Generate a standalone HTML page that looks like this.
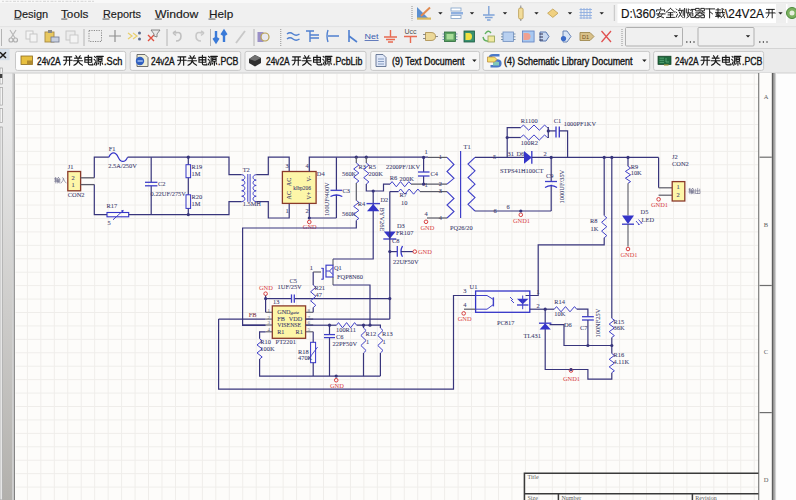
<!DOCTYPE html>
<html><head><meta charset="utf-8">
<style>
html,body{margin:0;padding:0;width:796px;height:500px;overflow:hidden;background:#f0f0f0}
svg{display:block}
.ui{font-family:"Liberation Sans",sans-serif;fill:#202020}
#ov{position:absolute;left:0;top:0;width:796px;height:500px}
.ut{position:absolute;font-family:"Liberation Sans",sans-serif;line-height:normal;white-space:pre;transform-origin:0 0}
.sc{font-family:"Liberation Serif",serif;font-size:6.4px;fill:#40406e;stroke:#40406e;stroke-width:0.08px}
.gnd{font-family:"Liberation Serif",serif;font-size:6.4px;fill:#d84040}
.tb{font-family:"Liberation Serif",serif;font-size:6px;fill:#606060}
</style></head><body>
<svg width="796" height="500" viewBox="0 0 796 500">
<defs>
<pattern id="grid" patternUnits="userSpaceOnUse" x="26.9" y="83.7" width="13.46" height="13.43">
<path d="M0 0.5H13.46M0.5 0V13.43" stroke="#efedea" stroke-width="1" fill="none"/>
</pattern>
</defs>

<rect x="0" y="0" width="796" height="3" fill="#f8f8f8"/>
<rect x="0" y="3" width="796" height="23.5" fill="#f0f0f0"/>
<rect x="0" y="26.5" width="796" height="22" fill="#efefef"/>
<rect x="0" y="48" width="796" height="1" fill="#d4d4d4"/>
<rect x="0" y="49" width="796" height="24" fill="#ebebeb"/>
<linearGradient id="lpg" x1="0" y1="0" x2="0" y2="1"><stop offset="0" stop-color="#ececec"/><stop offset="0.13" stop-color="#e8e8e8"/><stop offset="1" stop-color="#b2b0ac"/></linearGradient>
<rect x="0" y="49" width="14.5" height="451" fill="#ececec"/>
<rect x="2.6" y="73" width="9.8" height="427" fill="url(#lpg)"/>
<rect x="12.4" y="73" width="1.6" height="427" fill="#c8c8c8"/>
<linearGradient id="lbg" x1="0" y1="0" x2="0" y2="1"><stop offset="0" stop-color="#b4b4b4"/><stop offset="1" stop-color="#808080"/></linearGradient><rect x="14" y="73.5" width="1" height="427" fill="url(#lbg)"/>
<rect x="0" y="68" width="2.6" height="16" fill="#f4f4f4" stroke="#a0a0a0" stroke-width="0.7"/>
<rect x="0" y="74" width="2.2" height="4" fill="#404040"/>
<rect x="0" y="87.6" width="2.6" height="17.5" fill="#f4f4f4" stroke="#a0a0a0" stroke-width="0.7"/>
<rect x="0" y="108.5" width="2.6" height="14" fill="#f4f4f4" stroke="#a0a0a0" stroke-width="0.7"/>
<rect x="0" y="127" width="2.2" height="373" fill="#f6f6f6" stroke="#909090" stroke-width="0.7"/>
<rect x="15" y="73.5" width="760.5" height="427" fill="#fdfcfa"/>
<rect x="15.5" y="73.5" width="743" height="427" fill="url(#grid)"/>
<rect x="775" y="73" width="21" height="427" fill="#fdfdfd"/>
<rect x="0" y="72.5" width="796" height="1" fill="#cfcfcf"/>

<rect x="14" y="18.6" width="7" height="0.9" fill="#404040"/>
<rect x="61.3" y="18.6" width="6" height="0.9" fill="#404040"/>
<rect x="102.5" y="18.6" width="7" height="0.9" fill="#404040"/>
<rect x="154.8" y="18.6" width="7" height="0.9" fill="#404040"/>
<rect x="208.5" y="18.6" width="7" height="0.9" fill="#404040"/>
<path d="M2 1.4 H95" stroke="#dcdcdc" stroke-width="1.2" stroke-dasharray="2 1.5 3 1"/>
<rect x="452" y="2.3" width="344" height="0.8" fill="#e2e2e2"/>
<line x1="412" y1="6" x2="412" y2="20.5" stroke="#a8a8a8" stroke-width="1.3" stroke-dasharray="1 1"/>
<path d="M417 7 L417 18 L428 18 Z" fill="#5b8fd0"/><rect x="417" y="17.5" width="14" height="2.2" fill="#d8b860"/><path d="M421 16 L430 7.5" stroke="#e08a50" stroke-width="2"/>
<path d="M438.2 12.2 H442.59999999999997 L440.4 14.6 Z" fill="#202020"/>
<rect x="451" y="8" width="10" height="3" fill="#fff" stroke="#7fa0c8" stroke-width="0.8"/><rect x="451" y="12" width="12" height="2.5" fill="#8fb0e0"/><rect x="451" y="15.5" width="10" height="3" fill="#fff" stroke="#7fa0c8" stroke-width="0.8"/>
<path d="M469.8 12.2 H474.2 L472 14.6 Z" fill="#202020"/>
<path d="M488.8 6 V15 M483 15 H494.6 M485 17.5 H492.6 M487 20 H490.6" stroke="#7fa3d8" stroke-width="1.4"/>
<path d="M502.8 12.2 H507.2 L505 14.6 Z" fill="#202020"/>
<rect x="518.6" y="8" width="4.5" height="11" rx="1.5" fill="#f2dc9a" stroke="#b89a50" stroke-width="0.8"/><path d="M520.8 5.5 V8 M520.8 19 V21" stroke="#8a8a8a" stroke-width="1"/>
<path d="M534.3 12.2 H538.7 L536.5 14.6 Z" fill="#202020"/>
<path d="M547.6 13.2 L552.8 9 L558 13.2 L552.8 17.4 Z" fill="#f0d080" stroke="#c0a050" stroke-width="0.8"/>
<path d="M567.8 12.2 H572.2 L570 14.6 Z" fill="#202020"/>
<path d="M581 8V19 M584 8V19 M587 8V19 M590 8V19 M579.5 9.5H592 M579.5 12.5H592 M579.5 15.5H592 M579.5 18H592" stroke="#90aee0" stroke-width="0.9"/>
<path d="M599.5 12.2 H603.9000000000001 L601.7 14.6 Z" fill="#202020"/>
<line x1="614.4" y1="5.5" x2="614.4" y2="21" stroke="#a8a8a8" stroke-width="1.3" stroke-dasharray="1 1"/>
<rect x="617.5" y="4" width="170" height="19" fill="#ffffff"/>
<path d="M778.3 12.2 H782.7 L780.5 14.6 Z" fill="#202020"/>
<path transform="translate(655.6,7.9) scale(1.0)" d="M5 0V1.2 M1 3.5V2H9V3.5 M4.5 3.5Q3.5 6 2 7.5L8 9.8 M1 6H9.5 M7 6Q6 9 1.5 10" stroke="#1a1a1a" stroke-width="0.95" fill="none" stroke-linecap="round"/>
<path transform="translate(665.5,7.9) scale(1.0)" d="M5 0.5L0.5 4.5 M5 0.5L9.5 4.5 M2.5 4.8H7.5 M2.5 7H7.5 M1 9.5H9 M5 4.8V9.5" stroke="#1a1a1a" stroke-width="0.95" fill="none" stroke-linecap="round"/>
<path transform="translate(675.4,7.9) scale(1.0)" d="M0.8 1L1.8 2 M0.5 4L1.6 5 M0.6 9.5L2 6.5 M4.5 0.5V1.8 M3 2.5H7 M6.5 3Q5.5 7 3 9.5 M3.8 4Q5 7.5 7 9.5 M7.8 2V7.5 M9.2 0.5V9.5Q9.2 10 8.5 9.8" stroke="#1a1a1a" stroke-width="0.95" fill="none" stroke-linecap="round"/>
<path transform="translate(685.3000000000001,7.9) scale(1.0)" d="M1 1V5 M3 1V5 M4.5 1.5L6 3 M6 1.5H9.5 M7 1.5V4 M2.5 5H7.5V8 M2.5 5V8 M4.5 6Q4.5 9 1.5 10 M5.5 6V9.5H9.5V8.5" stroke="#1a1a1a" stroke-width="0.95" fill="none" stroke-linecap="round"/>
<path transform="translate(695.2,7.9) scale(1.0)" d="M0.8 0.5H4V3H0.8Z M6 0.5H9.2V3H6Z M0.5 5H9.5 M5 3.5Q4 6 1 7 M5.5 5L9 7 M7.2 3.5L8 4.2 M0.8 7.2H4V9.8H0.8Z M6 7.2H9.2V9.8H6Z" stroke="#1a1a1a" stroke-width="0.95" fill="none" stroke-linecap="round"/>
<path transform="translate(705.1,7.9) scale(1.0)" d="M0.5 1H9.5 M4.5 1V10 M5 4L7.5 6" stroke="#1a1a1a" stroke-width="0.95" fill="none" stroke-linecap="round"/>
<path transform="translate(715.0,7.9) scale(1.0)" d="M1 2H5.5 M3 0.5V4.5 M0.5 4.5H9.5 M7 0.5Q7.5 7 9.5 10 M8 1L9 1.8 M9.5 6L6 10 M1 6H5.5 M2.8 4.5L1.5 7.5H5 M3.2 6V10 M0.5 8.5H6" stroke="#1a1a1a" stroke-width="0.95" fill="none" stroke-linecap="round"/>
<path transform="translate(765.4,7.9) scale(1.0)" d="M1 1.5H9 M0.5 5H9.5 M3.5 1.5V6Q3.3 8.5 1.2 9.8 M6.8 1.5V10" stroke="#1a1a1a" stroke-width="0.95" fill="none" stroke-linecap="round"/>
<path transform="translate(775.6,7.9) scale(1.0)" d="M2.8 0.3L3.8 1.8 M7.2 0.3L6.2 1.8 M1.5 2.8H8.5 M0.5 5.5H9.5 M5 2.8V5.5Q4.5 8.5 0.8 10 M5.2 6Q6.5 8.7 9.5 10" stroke="#1a1a1a" stroke-width="0.95" fill="none" stroke-linecap="round"/>
<rect x="776" y="4" width="10" height="19" fill="#eeeeee"/>
<path d="M778.3 12.2 H782.7 L780.5 14.6 Z" fill="#202020"/>
<circle cx="792" cy="13" r="5.5" fill="#7cb060" stroke="#4a8a3a" stroke-width="1"/><circle cx="792" cy="13" r="2.5" fill="#e8f0e0"/>
<rect x="0" y="26.3" width="796" height="0.8" fill="#dedede"/>
<line x1="1.5" y1="29" x2="1.5" y2="46" stroke="#b4b4b4" stroke-width="1"/>
<path d="M10 30 L15 38 M16 30 L11 38" stroke="#b8b8b8" stroke-width="1.2"/><circle cx="11" cy="40" r="2" fill="none" stroke="#b0b0b0" stroke-width="1.2"/><circle cx="15.5" cy="40" r="2" fill="none" stroke="#b0b0b0" stroke-width="1.2"/>
<rect x="26" y="31" width="7" height="8" fill="#f4f4f4" stroke="#c4c4c4" stroke-width="0.9"/><rect x="30" y="34" width="7" height="8" fill="#f4f4f4" stroke="#c4c4c4" stroke-width="0.9"/>
<rect x="45" y="32" width="9" height="10" fill="#e8c860" stroke="#a88a40" stroke-width="0.9"/><rect x="48" y="30" width="4" height="3" fill="#888"/><rect x="51" y="37" width="8" height="5" fill="#c8d0e0" stroke="#707890" stroke-width="0.8"/>
<rect x="66" y="31" width="9" height="9" fill="#ececec" stroke="#c4c4c4" stroke-width="0.9"/><rect x="70" y="35" width="8" height="8" fill="#f4f4f4" stroke="#c8c8c8" stroke-width="0.9"/>
<line x1="84" y1="29" x2="84" y2="46" stroke="#b4b4b4" stroke-width="1"/>
<rect x="89" y="30.5" width="12.5" height="11" fill="none" stroke="#8a8a8a" stroke-width="1" stroke-dasharray="1.2 1.2"/>
<path d="M115 30 V42 M109 36 H121" stroke="#909090" stroke-width="1.2"/>
<path d="M128 33 L132 36 L128 39 M133 33 L137 36 L133 39" stroke="#e8d070" stroke-width="1.3" fill="none"/><circle cx="139.5" cy="33" r="1.5" fill="#607090"/><circle cx="139.5" cy="39" r="1.5" fill="#607090"/>
<path d="M148 35 L154 41 M154 35 L148 41" stroke="#e05040" stroke-width="1.4"/><path d="M151 30 H160 L157 34 V37 L154 36 V34 Z" fill="#e8e8e8" stroke="#707070" stroke-width="0.8"/>
<line x1="167" y1="29" x2="167" y2="46" stroke="#b4b4b4" stroke-width="1"/>
<path d="M175 33 Q181 31 181 36 Q181 41 176 41 M173 33 L176 31 M173 33 L176 35.5" stroke="#c0c0c0" stroke-width="1.6" fill="none"/>
<path d="M202 33 Q196 31 196 36 Q196 41 201 41 M204 33 L201 31 M204 33 L201 35.5" stroke="#c8c8c8" stroke-width="1.6" fill="none"/>
<line x1="210.5" y1="29" x2="210.5" y2="46" stroke="#b4b4b4" stroke-width="1"/>
<path d="M216 31 V41 M213.5 38 L216 42 L218.5 38" stroke="#3a7ad8" stroke-width="2.4" fill="none"/><path d="M224 42 V32 M221.5 35 L224 31 L226.5 35" stroke="#3a7ad8" stroke-width="2.4" fill="none"/>
<path d="M236 43 L245 31" stroke="#c8c8c8" stroke-width="1.8"/>
<line x1="254" y1="29" x2="254" y2="46" stroke="#b4b4b4" stroke-width="1"/>
<rect x="257.5" y="32" width="6" height="10" fill="#9a90c8"/><circle cx="265" cy="37" r="4" fill="#e8e8f0" stroke="#b8a050" stroke-width="1.2"/>
<line x1="280.7" y1="29" x2="280.7" y2="46" stroke="#a8a8a8" stroke-width="1.3" stroke-dasharray="1 1"/>
<path d="M287 34 Q290 31.5 293 34 T299.5 34 M287 39 Q290 36.5 293 39 T299.5 39" stroke="#5080d0" stroke-width="1.4" fill="none"/>
<path d="M306 31 H314 M310 31 V42 M310 35 H319 M310 38 H319" stroke="#5080d0" stroke-width="1.4" fill="none"/>
<path d="M328 30 Q326 36 328 42 M328 36 H339" stroke="#5080d0" stroke-width="1.4" fill="none" stroke-dasharray="none"/>
<path d="M349 30 V42 M349 36 L357 42" stroke="#5080d0" stroke-width="1.6" fill="none"/>
<text x="364.6" y="38.5" class="ui" style="font-size:7px;fill:#4060b0" textLength="14" lengthAdjust="spacingAndGlyphs">Net</text><rect x="364.6" y="40" width="14" height="0.8" fill="#4060b0"/>
<path d="M390.5 30 V37 M384 37 H397 M386 39.5 H395 M388 42 H393" stroke="#e86a50" stroke-width="1.4"/>
<text x="404.5" y="33.8" class="ui" style="font-size:7px;fill:#505050">Ucc</text><path d="M404 36.5 H417 M410.5 36.5 V43" stroke="#e86a50" stroke-width="1.4"/>
<path d="M425.5 32.5 H431 Q435.5 32.5 435.5 36.5 Q435.5 40.5 431 40.5 H425.5 Z" fill="#ecd898" stroke="#a88a48" stroke-width="0.8"/><path d="M423 34.5 H425.5 M423 38.5 H425.5 M435.5 36.5 H438" stroke="#707070" stroke-width="0.8"/>
<rect x="444.5" y="32" width="11" height="9.5" fill="#5aa060" stroke="#2a6a3a" stroke-width="0.8"/><rect x="446.5" y="34" width="7" height="5.5" fill="#a8dc98"/><path d="M442.5 34 H444.5 M442.5 36.8 H444.5 M442.5 39.5 H444.5 M455.5 34 H457.5 M455.5 36.8 H457.5 M455.5 39.5 H457.5" stroke="#6080a0" stroke-width="0.8"/>
<rect x="464" y="31" width="10.5" height="11" fill="#3a9070" stroke="#1a5a40" stroke-width="0.8"/><path d="M465.5 33 H469 Q472 33 472 36.5 Q472 40 469 40 H465.5 Z" fill="#f0e040"/>
<path d="M485 34 Q488 29 491 33 M483 37 Q484 42 489 41" stroke="#60b060" stroke-width="1.4" fill="none"/><rect x="488" y="36" width="6.5" height="6" fill="#f0e8a0" stroke="#90a050" stroke-width="0.8"/>
<rect x="503" y="32" width="10.5" height="9.5" fill="#b8d0f0" stroke="#7090c0" stroke-width="0.8"/><path d="M501 34 H503 M501 36.8 H503 M501 39.5 H503 M513.5 34 H515.5 M513.5 36.8 H515.5 M513.5 39.5 H515.5" stroke="#6080a0" stroke-width="0.8"/>
<rect x="522.6" y="31" width="11.5" height="11" fill="#a8c8f0" stroke="#6080c0" stroke-width="0.8"/><path d="M523.5 33 H527 Q530.5 33 530.5 36.5 Q530.5 40 527 40 H523.5 Z" fill="#f0a090"/>
<path d="M540 32 H546 L549 36.5 L546 41 H540 Z" fill="#c8d8f0" stroke="#5a78b0" stroke-width="1"/><path d="M539.5 34 H543 M539.5 37 H543 M539.5 40 H543" stroke="#303050" stroke-width="1"/>
<path d="M563 31 H567 L571 36.5 L567 42 H563 Z" fill="#d8e4f4" stroke="#5a78b0" stroke-width="0.9"/><circle cx="563.5" cy="38.5" r="2.6" fill="#3a6ac8"/>
<path d="M580 32.5 H590 L594 36.5 L590 40.5 H580 Z" fill="#d8c088" stroke="#a08a50" stroke-width="0.9"/><text x="582" y="39" class="ui" style="font-size:5.5px;fill:#705020">D1</text>
<path d="M601.5 31 L611 42 M611 31 L601.5 42" stroke="#e05050" stroke-width="1.3"/>
<line x1="622" y1="29" x2="622" y2="46" stroke="#a8a8a8" stroke-width="1.3" stroke-dasharray="1 1"/>
<rect x="625.5" y="27.5" width="57" height="18.5" fill="#f0f0f0" stroke="#a8a8a8" stroke-width="0.9" rx="1"/>
<path d="M673.8 35.2 H678.2 L676 37.6 Z" fill="#202020"/>
<path d="M686.2 42h1.2M689.8 42h1.2M693.4 42h1.2" stroke="#404040" stroke-width="1.3"/>
<rect x="698" y="27.5" width="56" height="18.5" fill="#f0f0f0" stroke="#a8a8a8" stroke-width="0.9" rx="1"/>
<path d="M745.8 35.2 H750.2 L748 37.6 Z" fill="#202020"/>
<path d="M759.2 42h1.2M762.8 42h1.2M766.4 42h1.2" stroke="#404040" stroke-width="1.3"/>
<rect x="0" y="49" width="9.6" height="11.2" fill="#d4dfea"/>
<path d="M0 52.2 L6 58 M6 52.2 L0 58" stroke="#1a1a1a" stroke-width="1.5"/>
<rect x="15.5" y="51.4" width="110.2" height="19" rx="2" fill="#fdfdfd" stroke="#c8c8c8" stroke-width="1"/>
<rect x="21" y="56" width="11.5" height="8.5" fill="#e8c040" stroke="#8a6a20" stroke-width="0.8"/><rect x="27" y="60.5" width="5.5" height="4" fill="#b08a30"/>
<path transform="translate(62.9,55.4) scale(0.9800000000000001)" d="M1 1.5H9 M0.5 5H9.5 M3.5 1.5V6Q3.3 8.5 1.2 9.8 M6.8 1.5V10" stroke="#181818" stroke-width="1.17" fill="none" stroke-linecap="round"/>
<path transform="translate(73.15,55.4) scale(0.9800000000000001)" d="M2.8 0.3L3.8 1.8 M7.2 0.3L6.2 1.8 M1.5 2.8H8.5 M0.5 5.5H9.5 M5 2.8V5.5Q4.5 8.5 0.8 10 M5.2 6Q6.5 8.7 9.5 10" stroke="#181818" stroke-width="1.17" fill="none" stroke-linecap="round"/>
<path transform="translate(83.4,55.4) scale(0.9800000000000001)" d="M1.5 2H8.5V7H1.5Z M1.5 4.5H8.5 M5 0V8.5Q5 9.7 6.5 9.7H9.5V8.5" stroke="#181818" stroke-width="1.17" fill="none" stroke-linecap="round"/>
<path transform="translate(93.65,55.4) scale(0.9800000000000001)" d="M0.8 1L1.8 2 M0.5 4L1.6 5 M0.6 9.5L2 6.5 M3 1H9.8 M3.5 1V6Q3.3 8.5 2.5 10 M5 2.5H8.5V6H5Z M5 4.2H8.5 M6.8 6V10 M5.2 7.5L4.5 9 M8.5 7.5L9.2 9" stroke="#181818" stroke-width="1.17" fill="none" stroke-linecap="round"/>
<rect x="130.2" y="51.4" width="110.5" height="19" rx="2" fill="#f6f6f6" stroke="#c8c8c8" stroke-width="1"/>
<path d="M137 54.5 H145 L148 57.5 V66.5 H137 Z" fill="#eeeed8" stroke="#606060" stroke-width="0.9"/><circle cx="140" cy="61" r="4.2" fill="#3060c0"/><path d="M137.5 61 H142.8" stroke="#c8e0ff" stroke-width="1.1"/>
<path transform="translate(177.0,55.4) scale(0.9800000000000001)" d="M1 1.5H9 M0.5 5H9.5 M3.5 1.5V6Q3.3 8.5 1.2 9.8 M6.8 1.5V10" stroke="#181818" stroke-width="1.17" fill="none" stroke-linecap="round"/>
<path transform="translate(187.25,55.4) scale(0.9800000000000001)" d="M2.8 0.3L3.8 1.8 M7.2 0.3L6.2 1.8 M1.5 2.8H8.5 M0.5 5.5H9.5 M5 2.8V5.5Q4.5 8.5 0.8 10 M5.2 6Q6.5 8.7 9.5 10" stroke="#181818" stroke-width="1.17" fill="none" stroke-linecap="round"/>
<path transform="translate(197.5,55.4) scale(0.9800000000000001)" d="M1.5 2H8.5V7H1.5Z M1.5 4.5H8.5 M5 0V8.5Q5 9.7 6.5 9.7H9.5V8.5" stroke="#181818" stroke-width="1.17" fill="none" stroke-linecap="round"/>
<path transform="translate(207.75,55.4) scale(0.9800000000000001)" d="M0.8 1L1.8 2 M0.5 4L1.6 5 M0.6 9.5L2 6.5 M3 1H9.8 M3.5 1V6Q3.3 8.5 2.5 10 M5 2.5H8.5V6H5Z M5 4.2H8.5 M6.8 6V10 M5.2 7.5L4.5 9 M8.5 7.5L9.2 9" stroke="#181818" stroke-width="1.17" fill="none" stroke-linecap="round"/>
<rect x="245" y="51.4" width="121" height="19" rx="2" fill="#f6f6f6" stroke="#c8c8c8" stroke-width="1"/>
<path d="M249 59 L255 55 L261 58 V63 L255 66.5 L249 63 Z" fill="#303030"/><path d="M249 59 L255 55 L261 58 L255 61 Z" fill="#707070"/>
<path transform="translate(291.6,55.4) scale(0.9800000000000001)" d="M1 1.5H9 M0.5 5H9.5 M3.5 1.5V6Q3.3 8.5 1.2 9.8 M6.8 1.5V10" stroke="#181818" stroke-width="1.17" fill="none" stroke-linecap="round"/>
<path transform="translate(301.85,55.4) scale(0.9800000000000001)" d="M2.8 0.3L3.8 1.8 M7.2 0.3L6.2 1.8 M1.5 2.8H8.5 M0.5 5.5H9.5 M5 2.8V5.5Q4.5 8.5 0.8 10 M5.2 6Q6.5 8.7 9.5 10" stroke="#181818" stroke-width="1.17" fill="none" stroke-linecap="round"/>
<path transform="translate(312.1,55.4) scale(0.9800000000000001)" d="M1.5 2H8.5V7H1.5Z M1.5 4.5H8.5 M5 0V8.5Q5 9.7 6.5 9.7H9.5V8.5" stroke="#181818" stroke-width="1.17" fill="none" stroke-linecap="round"/>
<path transform="translate(322.35,55.4) scale(0.9800000000000001)" d="M0.8 1L1.8 2 M0.5 4L1.6 5 M0.6 9.5L2 6.5 M3 1H9.8 M3.5 1V6Q3.3 8.5 2.5 10 M5 2.5H8.5V6H5Z M5 4.2H8.5 M6.8 6V10 M5.2 7.5L4.5 9 M8.5 7.5L9.2 9" stroke="#181818" stroke-width="1.17" fill="none" stroke-linecap="round"/>
<rect x="370.7" y="51.4" width="108.90000000000003" height="19" rx="2" fill="#f6f6f6" stroke="#c8c8c8" stroke-width="1"/>
<path d="M376 54.5 H383 L386 57.5 V66.5 H376 Z" fill="#e0e8f8" stroke="#607090" stroke-width="0.9"/><path d="M378 59 H384 M378 61.5 H384 M378 64 H384" stroke="#7088b0" stroke-width="0.8"/>
<path d="M472.2 59.6 H476.59999999999997 L474.4 62.0 Z" fill="#202020"/>
<rect x="483" y="51.4" width="166.70000000000005" height="19" rx="2" fill="#f6f6f6" stroke="#c8c8c8" stroke-width="1"/>
<path d="M499.5 55.2 H493 Q490 55.2 490 58 Q490 60.5 493 60.5 H497 Q500.3 60.5 500.3 63.2 Q500.3 66.2 497 66.2 H490.5" stroke="#4a78c8" stroke-width="2.6" fill="none"/><rect x="493" y="62" width="6" height="3.5" fill="#80c8b8"/><path d="M487.5 57 H494.5 L497 59.5 L494.5 62 H487.5 Z" fill="#f4e070" stroke="#c09040" stroke-width="0.8"/>
<path d="M642.1999999999999 59.6 H646.6 L644.4 62.0 Z" fill="#202020"/>
<rect x="653.6" y="51.4" width="110.0" height="19" rx="2" fill="#f6f6f6" stroke="#c8c8c8" stroke-width="1"/>
<rect x="658" y="56.2" width="13" height="8.3" fill="#1f6a3e" stroke="#0f3a20" stroke-width="0.7"/><path d="M659.5 58.2 H664 M659.5 60.3 H664 M659.5 62.4 H664 M666 58 V62 H669" stroke="#6ab888" stroke-width="0.7" fill="none"/><rect x="664" y="64.3" width="4.5" height="1.3" fill="#9a9a40"/>
<path transform="translate(700.5,55.4) scale(0.9800000000000001)" d="M1 1.5H9 M0.5 5H9.5 M3.5 1.5V6Q3.3 8.5 1.2 9.8 M6.8 1.5V10" stroke="#181818" stroke-width="1.17" fill="none" stroke-linecap="round"/>
<path transform="translate(710.75,55.4) scale(0.9800000000000001)" d="M2.8 0.3L3.8 1.8 M7.2 0.3L6.2 1.8 M1.5 2.8H8.5 M0.5 5.5H9.5 M5 2.8V5.5Q4.5 8.5 0.8 10 M5.2 6Q6.5 8.7 9.5 10" stroke="#181818" stroke-width="1.17" fill="none" stroke-linecap="round"/>
<path transform="translate(721.0,55.4) scale(0.9800000000000001)" d="M1.5 2H8.5V7H1.5Z M1.5 4.5H8.5 M5 0V8.5Q5 9.7 6.5 9.7H9.5V8.5" stroke="#181818" stroke-width="1.17" fill="none" stroke-linecap="round"/>
<path transform="translate(731.25,55.4) scale(0.9800000000000001)" d="M0.8 1L1.8 2 M0.5 4L1.6 5 M0.6 9.5L2 6.5 M3 1H9.8 M3.5 1V6Q3.3 8.5 2.5 10 M5 2.5H8.5V6H5Z M5 4.2H8.5 M6.8 6V10 M5.2 7.5L4.5 9 M8.5 7.5L9.2 9" stroke="#181818" stroke-width="1.17" fill="none" stroke-linecap="round"/>
<g id="sch">
<rect x="67.8" y="171.5" width="12.8" height="19.3" fill="#fdf6a8" stroke="#8a3a2a" stroke-width="1.3"/>
<text x="71.6" y="179.6" class="sc" >2</text>
<text x="71.6" y="187.2" class="sc" >1</text>
<text x="67.8" y="168.8" class="sc" >J1</text>
<text x="67.8" y="197" class="sc" >CON2</text>
<path transform="translate(54.4,177.2) scale(0.58)" d="M0.5 2H4 M2 0.5L1 5H3.8 M2.3 3.5V10 M0.3 7H4.2 M7 0.5L4.5 3.5 M7 0.5L9.5 3.5 M5.5 3.8H8.5 M5 5V10 M5 5H6.8V9.5 M5 7H6.8 M8 5V8 M9.3 4.5V10" stroke="#5a5a7a" stroke-width="0.95" fill="none" stroke-linecap="round"/>
<path transform="translate(60.6,177.2) scale(0.58)" d="M3.5 1L5 2Q5 6 1 10 M5 3Q6.5 7.5 9.5 10" stroke="#5a5a7a" stroke-width="0.95" fill="none" stroke-linecap="round"/>
<path d="M80.6 177.8 L94.3 177.8" stroke="#5a5a66" stroke-width="1.3" fill="none"/>
<path d="M80.6 184.6 L94.3 184.6" stroke="#5a5a66" stroke-width="1.3" fill="none"/>
<path d="M94.3 177.8 L94.3 157.2 L108.8 157.2" stroke="#38357c" stroke-width="1.2" fill="none"/>
<path d="M94.3 184.6 L94.3 214.6 L107.0 214.6" stroke="#38357c" stroke-width="1.2" fill="none"/>
<path d="M108.8 157.2 C111.5 151.5 115.5 151.5 118.2 157.2 C120.9 162.9 124.9 162.9 127.6 157.2" stroke="#3434c8" stroke-width="1.2" fill="none"/>
<text x="108.8" y="151" class="sc" >F1</text>
<text x="108.3" y="168" class="sc" >2.5A/250V</text>
<path d="M127.6 157.2 L229.0 157.2 L229.0 174.7 L241.7 174.7" stroke="#38357c" stroke-width="1.2" fill="none"/>
<rect x="107" y="212.5" width="21.7" height="4.3" fill="none" stroke="#3434c8" stroke-width="1.1"/>
<path d="M113.0 219.8 L123.2 210.5" stroke="#4040c8" stroke-width="1.0" fill="none"/>
<path d="M121 210.6 L123.6 210.1 L123 212.6 Z" fill="#3434c8"/>
<text x="106.6" y="207.8" class="sc" >R17</text>
<text x="107.6" y="224.6" class="sc" >5</text>
<path d="M128.7 214.6 L229.0 214.6 L229.0 201.6 L241.7 201.6" stroke="#38357c" stroke-width="1.2" fill="none"/>
<path d="M151.2 157.2 L151.2 182.3" stroke="#38357c" stroke-width="1.2" fill="none"/>
<path d="M151.2 185.8 L151.2 214.6" stroke="#38357c" stroke-width="1.2" fill="none"/>
<path d="M145.0 182.3 L157.4 182.3" stroke="#4040c8" stroke-width="1.3" fill="none"/>
<path d="M145.0 185.8 L157.4 185.8" stroke="#4040c8" stroke-width="1.3" fill="none"/>
<text x="158" y="185.7" class="sc" >C2</text>
<text x="150.6" y="195.8" class="sc" >0.22UF/275V</text>
<path d="M188.3 157.2 L188.3 164.7" stroke="#38357c" stroke-width="1.2" fill="none"/>
<rect x="186" y="164.7" width="4.6" height="13" fill="none" stroke="#3434c8" stroke-width="1.0"/>
<path d="M188.3 177.7 L188.3 194.8" stroke="#38357c" stroke-width="1.2" fill="none"/>
<rect x="186" y="194.8" width="4.6" height="13.6" fill="none" stroke="#3434c8" stroke-width="1.0"/>
<path d="M188.3 208.4 L188.3 214.6" stroke="#38357c" stroke-width="1.2" fill="none"/>
<circle cx="188.3" cy="157.2" r="1.6" fill="#38357c"/>
<circle cx="188.3" cy="214.6" r="1.6" fill="#38357c"/>
<text x="191.6" y="168.8" class="sc" >R19</text>
<text x="191.6" y="175.6" class="sc" >1M</text>
<text x="191.6" y="199.4" class="sc" >R20</text>
<text x="191.6" y="206.2" class="sc" >1M</text>
<path d="M241.7 174.7 C245.89999999999998 174.969 245.89999999999998 179.81099999999998 241.7 180.07999999999998 C245.89999999999998 180.349 245.89999999999998 185.19099999999997 241.7 185.45999999999998 C245.89999999999998 185.72899999999998 245.89999999999998 190.57099999999997 241.7 190.83999999999997 C245.89999999999998 191.10899999999998 245.89999999999998 195.95099999999996 241.7 196.21999999999997 C245.89999999999998 196.48899999999998 245.89999999999998 201.33099999999996 241.7 201.59999999999997" stroke="#4040c8" stroke-width="1.0" fill="none"/>
<path d="M256.2 174.7 C252.0 174.969 252.0 179.81099999999998 256.2 180.07999999999998 C252.0 180.349 252.0 185.19099999999997 256.2 185.45999999999998 C252.0 185.72899999999998 252.0 190.57099999999997 256.2 190.83999999999997 C252.0 191.10899999999998 252.0 195.95099999999996 256.2 196.21999999999997 C252.0 196.48899999999998 252.0 201.33099999999996 256.2 201.59999999999997" stroke="#4040c8" stroke-width="1.0" fill="none"/>
<path d="M247.8 174.0 L247.8 201.8" stroke="#4040c8" stroke-width="1.0" fill="none"/>
<path d="M250.1 174.0 L250.1 201.8" stroke="#4040c8" stroke-width="1.0" fill="none"/>
<text x="242.7" y="171.5" class="sc" >T2</text>
<text x="242.7" y="206.4" class="sc" >1.5MH</text>
<path d="M256.2 174.7 L268.3 174.7 L268.3 157.1 L289.2 157.1 L289.2 171.5" stroke="#38357c" stroke-width="1.2" fill="none"/>
<path d="M256.2 201.6 L268.3 201.6 L268.3 218.0 L289.2 218.0 L289.2 203.4" stroke="#38357c" stroke-width="1.2" fill="none"/>
<rect x="282.4" y="171.5" width="33.7" height="31.9" fill="#fdf6a8" stroke="#8a3a2a" stroke-width="1.3"/>
<text x="293.2" y="189.6" class="sc" style="font-size:5.4px;fill:#3a3a70">klbp206</text>
<text class="sc" transform="translate(290.8,186.2) rotate(-90)" style="font-size:6px;fill:#3a3a70">AC</text>
<text class="sc" transform="translate(290.8,199.4) rotate(-90)" style="font-size:6px;fill:#3a3a70">AC</text>
<text class="sc" transform="translate(311,181.6) rotate(-90)" style="font-size:6px;fill:#3a3a70">V-</text>
<text class="sc" transform="translate(311,199.6) rotate(-90)" style="font-size:6px;fill:#3a3a70">V+</text>
<text x="285.4" y="167.5" class="sc" >3</text>
<text x="285.4" y="212.5" class="sc" >1</text>
<text x="305.5" y="167.5" class="sc" >4</text>
<text x="305.5" y="212.5" class="sc" >2</text>
<text x="316.8" y="176" class="sc" >D4</text>
<path d="M309.3 171.5 L309.3 157.2 L428.0 157.2" stroke="#38357c" stroke-width="1.2" fill="none"/>
<path d="M428.0 157.4 L447.0 157.4" stroke="#5a5a66" stroke-width="1.2" fill="none"/>
<path d="M309.3 203.4 L309.3 218.0 L336.4 218.0" stroke="#38357c" stroke-width="1.2" fill="none"/>
<circle cx="309.3" cy="218" r="1.6" fill="#38357c"/>
<circle cx="309.3" cy="222" r="1.8" fill="none" stroke="#d84040" stroke-width="1"/>
<text x="302.8" y="229" class="gnd" >GND</text>
<path d="M336.4 157.2 L336.4 190.3" stroke="#38357c" stroke-width="1.2" fill="none"/>
<path d="M336.4 194.8 L336.4 218.0" stroke="#38357c" stroke-width="1.2" fill="none"/>
<path d="M330.5 190.3 L342.3 190.3" stroke="#4040c8" stroke-width="1.3" fill="none"/>
<path d="M330.5 196.5 Q336.4 193.5 342.3 196.5" stroke="#3434c8" stroke-width="1.3" fill="none"/>
<text x="342.5" y="193" class="sc" >C3</text>
<text class="sc" transform="translate(329,216) rotate(-90)">100UF/400V</text>
<circle cx="356.3" cy="157.2" r="1.6" fill="#38357c"/>
<circle cx="366.3" cy="157.2" r="1.6" fill="#38357c"/>
<path d="M356.3 163.0 L358.9 165.0 L353.7 169.0 L358.9 173.0 L353.7 177.0 L358.9 181.0 L356.3 183.0" stroke="#4040c8" stroke-width="1.0" fill="none"/>
<path d="M356.3 200.4 L358.9 202.4 L353.7 206.4 L358.9 210.4 L353.7 214.4 L358.9 218.4 L356.3 220.4" stroke="#4040c8" stroke-width="1.0" fill="none"/>
<path d="M356.3 157.2 L356.3 163.0" stroke="#5a5a66" stroke-width="1.2" fill="none"/>
<path d="M356.3 183.0 L356.3 200.4" stroke="#5a5a66" stroke-width="1.2" fill="none"/>
<path d="M356.3 220.4 L356.3 228.0 L242.6 228.0 L242.6 325.4 L265.6 325.4" stroke="#38357c" stroke-width="1.2" fill="none"/>
<text x="358.5" y="168.6" class="sc" >R3</text>
<text x="342" y="176" class="sc" >560K</text>
<text x="357.8" y="206" class="sc" >R4</text>
<text x="342" y="215.5" class="sc" >560K</text>
<path d="M366.3 163.0 L368.9 165.1 L363.7 169.3 L368.9 173.5 L363.7 177.7 L368.9 181.9 L366.3 184.0" stroke="#4040c8" stroke-width="1.0" fill="none"/>
<path d="M366.3 157.2 L366.3 163.0" stroke="#5a5a66" stroke-width="1.2" fill="none"/>
<text x="368.6" y="168.6" class="sc" >R5</text>
<text x="368.6" y="176" class="sc" >200K</text>
<path d="M366.3 184.0 L366.3 191.0 L383.5 191.0 L383.5 184.2 L390.0 184.2" stroke="#38357c" stroke-width="1.2" fill="none"/>
<circle cx="373.2" cy="191" r="1.6" fill="#38357c"/>
<path d="M390.0 184.2 L392.1 181.6 L396.3 186.8 L400.5 181.6 L404.7 186.8 L408.9 181.6 L411.0 184.2" stroke="#4040c8" stroke-width="1.0" fill="none"/>
<path d="M411.0 184.2 L447.0 184.2" stroke="#5a5a66" stroke-width="1.2" fill="none"/>
<text x="389.8" y="180.4" class="sc" >R6</text>
<text x="399.6" y="181" class="sc" >200K</text>
<path d="M389.8 191.6 L398.5 191.6" stroke="#38357c" stroke-width="1.2" fill="none"/>
<path d="M398.5 191.6 L400.6 189.0 L404.9 194.2 L409.2 189.0 L413.6 194.2 L417.9 189.0 L420.0 191.6" stroke="#4040c8" stroke-width="1.0" fill="none"/>
<path d="M420.0 191.6 L447.0 191.6" stroke="#5a5a66" stroke-width="1.2" fill="none"/>
<text x="399.6" y="197.2" class="sc" >R7</text>
<text x="401" y="205" class="sc" >10</text>
<circle cx="423.6" cy="157.4" r="1.6" fill="#38357c"/>
<circle cx="423.6" cy="184.2" r="1.6" fill="#38357c"/>
<path d="M423.6 157.4 L423.6 172.0" stroke="#38357c" stroke-width="1.2" fill="none"/>
<path d="M423.6 176.0 L423.6 184.2" stroke="#38357c" stroke-width="1.2" fill="none"/>
<path d="M418.0 172.0 L429.5 172.0" stroke="#4040c8" stroke-width="1.3" fill="none"/>
<path d="M418.0 176.0 L429.5 176.0" stroke="#4040c8" stroke-width="1.3" fill="none"/>
<text x="430.4" y="175.6" class="sc" >C4</text>
<text x="386" y="168.7" class="sc" >2200PF/1KV</text>
<text x="424.6" y="153.8" class="sc" >1</text>
<text x="438.8" y="159" class="sc" >1</text>
<text x="438.8" y="186" class="sc" >2</text>
<text x="424.6" y="186.5" class="sc" >1</text>
<text x="438.8" y="193" class="sc" >3</text>
<text x="438.8" y="219.5" class="sc" >4</text>
<path d="M447.0 157.4 L454.0 164.5 L447.0 171.5 L454.0 178.3 L447.0 184.2" stroke="#4040c8" stroke-width="1.1" fill="none"/>
<path d="M447.0 191.6 L454.0 198.5 L447.0 205.0 L454.0 211.5 L447.0 218.0" stroke="#4040c8" stroke-width="1.1" fill="none"/>
<path d="M427.0 218.0 L447.0 218.0" stroke="#5a5a66" stroke-width="1.2" fill="none"/>
<text x="424.4" y="215.5" class="sc" >4</text>
<circle cx="426" cy="221.8" r="1.8" fill="none" stroke="#d84040" stroke-width="1"/>
<text x="420.5" y="229.6" class="gnd" >GND</text>
<path d="M460.6 151.0 L460.6 218.0" stroke="#4040c8" stroke-width="1.2" fill="none"/>
<text x="463.6" y="149" class="sc" >T1</text>
<text x="450" y="229.6" class="sc" >PQ26/20</text>
<path d="M475.0 157.4 L468.0 164.1 L475.0 170.8 L468.0 177.5 L475.0 184.2 L468.0 190.9 L475.0 197.6 L468.0 204.3 L475.0 211.0" stroke="#4040c8" stroke-width="1.1" fill="none"/>
<path d="M475.0 157.4 L524.0 157.4" stroke="#38357c" stroke-width="1.2" fill="none"/>
<path d="M475.0 211.0 L551.2 211.0" stroke="#38357c" stroke-width="1.2" fill="none"/>
<text x="493" y="158.5" class="sc" >5</text>
<text x="493.5" y="212.5" class="sc" >6</text>
<text x="506.5" y="208.5" class="sc" >6</text>
<circle cx="520.8" cy="214.8" r="1.8" fill="none" stroke="#d84040" stroke-width="1"/>
<text x="513" y="223" class="gnd" >GND1</text>
<circle cx="520.8" cy="211" r="1.6" fill="#38357c"/>
<path d="M524 151 L531.8 157.4 L524 163.8 Z" fill="#3434c8"/>
<path d="M531.8 151.0 L531.8 163.8" stroke="#4040c8" stroke-width="1.4" fill="none"/>
<path d="M531.8 157.4 L658.6 157.4" stroke="#38357c" stroke-width="1.2" fill="none"/>
<text x="507.5" y="155.6" class="sc" >31</text>
<text x="516.4" y="155.6" class="sc" >D6</text>
<text x="543.5" y="155.6" class="sc" >2</text>
<text x="500" y="172.6" class="sc" >STPS41H100CT</text>
<path d="M507.2 157.4 L507.2 127.6 L520.8 127.6" stroke="#38357c" stroke-width="1.2" fill="none"/>
<path d="M507.2 137.5 L520.8 137.5" stroke="#38357c" stroke-width="1.2" fill="none"/>
<circle cx="507.2" cy="137.5" r="1.6" fill="#38357c"/>
<circle cx="551.2" cy="157.4" r="1.6" fill="#38357c"/>
<path d="M520.8 127.6 L523.4 125.0 L528.7 130.2 L534.0 125.0 L539.3 130.2 L544.6 125.0 L547.2 127.6" stroke="#4040c8" stroke-width="1.0" fill="none"/>
<path d="M520.8 137.5 L523.4 134.9 L528.7 140.1 L534.0 134.9 L539.3 140.1 L544.6 134.9 L547.2 137.5" stroke="#4040c8" stroke-width="1.0" fill="none"/>
<path d="M547.2 127.6 L548.3 127.6 L548.3 137.5 L547.2 137.5" stroke="#38357c" stroke-width="1.2" fill="none"/>
<circle cx="548.3" cy="130.9" r="1.6" fill="#38357c"/>
<path d="M548.3 130.9 L556.0 130.9" stroke="#38357c" stroke-width="1.2" fill="none"/>
<path d="M556.0 126.5 L556.0 137.5" stroke="#4040c8" stroke-width="1.4" fill="none"/>
<path d="M559.3 126.5 L559.3 137.5" stroke="#4040c8" stroke-width="1.4" fill="none"/>
<path d="M559.3 130.9 L567.6 130.9 L567.6 157.4" stroke="#38357c" stroke-width="1.2" fill="none"/>
<text x="520.8" y="123.4" class="sc" >R1100</text>
<text x="520.8" y="144.6" class="sc" >100R2</text>
<text x="553.8" y="122.6" class="sc" >C1</text>
<text x="563.7" y="126.3" class="sc" >1000PF1KV</text>
<path d="M551.2 157.4 L551.2 181.5" stroke="#38357c" stroke-width="1.2" fill="none"/>
<path d="M551.2 184.8 L551.2 211.0" stroke="#38357c" stroke-width="1.2" fill="none"/>
<path d="M545.0 181.5 L557.0 181.5" stroke="#4040c8" stroke-width="1.3" fill="none"/>
<path d="M545 187.5 Q551.2 183.8 557 187.5" stroke="#3434c8" stroke-width="1.3" fill="none"/>
<text x="546" y="178" class="sc" >C9</text>
<text class="sc" transform="translate(564,203.5) rotate(-90)">1000UF/35V</text>
<circle cx="604.2" cy="157.4" r="1.6" fill="#38357c"/>
<circle cx="611.8" cy="157.4" r="1.6" fill="#38357c"/>
<circle cx="628" cy="157.4" r="1.6" fill="#38357c"/>
<path d="M604.2 157.4 L604.2 215.6" stroke="#38357c" stroke-width="1.2" fill="none"/>
<path d="M604.2 215.6 L606.8 217.8 L601.6 222.3 L606.8 226.7 L601.6 231.1 L606.8 235.6 L604.2 237.8" stroke="#4040c8" stroke-width="1.0" fill="none"/>
<path d="M604.2 237.8 L604.2 244.8 L538.2 244.8 L538.2 295.5 L525.6 295.5" stroke="#38357c" stroke-width="1.2" fill="none"/>
<text x="590" y="222.6" class="sc" >R8</text>
<text x="590.6" y="230.6" class="sc" >1K</text>
<path d="M611.8 157.4 L611.8 318.3" stroke="#38357c" stroke-width="1.2" fill="none"/>
<path d="M628.0 157.4 L628.0 166.3" stroke="#38357c" stroke-width="1.2" fill="none"/>
<path d="M628.0 166.3 L630.6 168.0 L625.4 171.4 L630.6 174.8 L625.4 178.2 L630.6 181.6 L628.0 183.3" stroke="#4040c8" stroke-width="1.0" fill="none"/>
<path d="M628.0 183.3 L628.0 215.6" stroke="#5a5a66" stroke-width="1.1" fill="none"/>
<path d="M622 215.6 L634 215.6 L628 224 Z" fill="#3434c8"/>
<path d="M622.0 224.2 L634.0 224.2" stroke="#4040c8" stroke-width="1.4" fill="none"/>
<path d="M628.0 224.0 L628.0 246.5" stroke="#5a5a66" stroke-width="1.1" fill="none"/>
<path d="M636 221 L639.5 225 M638.5 219.5 L642 223.5" stroke="#4040c8" stroke-width="0.9"/><path d="M639.5 225 l-1.8 -0.2 l1.2 -1.3 Z M642 223.5 l-1.8 -0.2 l1.2 -1.3 Z" fill="#4040c8"/>
<circle cx="628" cy="249" r="1.8" fill="none" stroke="#d84040" stroke-width="1"/>
<text x="620.5" y="257.4" class="gnd" >GND1</text>
<text x="630.7" y="169" class="sc" >R9</text>
<text x="630.7" y="175.1" class="sc" >10K</text>
<text x="640.6" y="214.2" class="sc" >D5</text>
<text x="641.6" y="222" class="sc" >LED</text>
<path d="M658.6 157.4 L658.6 187.8" stroke="#38357c" stroke-width="1.2" fill="none"/>
<path d="M658.6 187.8 L672.2 187.8" stroke="#5a5a66" stroke-width="1.2" fill="none"/>
<path d="M658.6 195.2 L672.2 195.2" stroke="#5a5a66" stroke-width="1.2" fill="none"/>
<circle cx="658.6" cy="199.3" r="1.8" fill="none" stroke="#d84040" stroke-width="1"/>
<text x="651" y="206.8" class="gnd" >GND1</text>
<rect x="672.2" y="181.6" width="12.6" height="19.4" fill="#fdf6a8" stroke="#8a3a2a" stroke-width="1.3"/>
<text x="676.4" y="188.7" class="sc" >1</text>
<text x="676.4" y="196.6" class="sc" >2</text>
<text x="672" y="159" class="sc" >J2</text>
<text x="672" y="165.6" class="sc" >CON2</text>
<path transform="translate(688.6,188) scale(0.58)" d="M0.5 2H4 M2 0.5L1 5H3.8 M2.3 3.5V10 M0.3 7H4.2 M7 0.5L4.5 3.5 M7 0.5L9.5 3.5 M5.5 3.8H8.5 M5 5V10 M5 5H6.8V9.5 M5 7H6.8 M8 5V8 M9.3 4.5V10" stroke="#5a5a7a" stroke-width="0.95" fill="none" stroke-linecap="round"/>
<path transform="translate(694.8000000000001,188) scale(0.58)" d="M5 0.5V9.5 M1.5 2V5H8.5V2 M1 5.5V9.5H9V5.5" stroke="#5a5a7a" stroke-width="0.95" fill="none" stroke-linecap="round"/>
<path d="M218.6 319.1 L218.6 389.2 L453.5 389.2 L453.5 295.5 L475.6 295.5" stroke="#38357c" stroke-width="1.2" fill="none"/>
<path d="M218.6 319.1 L265.6 319.1" stroke="#38357c" stroke-width="1.2" fill="none"/>
<path d="M242.6 325.0 L265.6 325.0" stroke="#38357c" stroke-width="1.2" fill="none"/>
<rect x="272.3" y="305.9" width="33.3" height="32.4" fill="#fdf6a8" stroke="#8a3a2a" stroke-width="1.3"/>
<path d="M265.6 312.3 L272.3 312.3" stroke="#5a5a66" stroke-width="1.1" fill="none"/>
<path d="M305.6 312.3 L313.2 312.3" stroke="#5a5a66" stroke-width="1.1" fill="none"/>
<path d="M265.6 319.1 L272.3 319.1" stroke="#5a5a66" stroke-width="1.1" fill="none"/>
<path d="M305.6 319.1 L313.2 319.1" stroke="#5a5a66" stroke-width="1.1" fill="none"/>
<path d="M265.6 325.0 L272.3 325.0" stroke="#5a5a66" stroke-width="1.1" fill="none"/>
<path d="M305.6 325.0 L313.2 325.0" stroke="#5a5a66" stroke-width="1.1" fill="none"/>
<path d="M265.6 331.8 L272.3 331.8" stroke="#5a5a66" stroke-width="1.1" fill="none"/>
<path d="M305.6 331.8 L313.2 331.8" stroke="#5a5a66" stroke-width="1.1" fill="none"/>
<text x="248.8" y="317.3" class="sc" style="fill:#a04040">FB</text>
<text x="277.2" y="314.2" class="sc" style="font-size:6.2px;fill:#38386a">GND</text>
<text x="290.4" y="314.2" class="sc" style="font-size:5px;font-style:italic;fill:#38386a">gate</text>
<text x="277.2" y="320.8" class="sc" style="font-size:6.2px;fill:#38386a">FB</text>
<text x="288.8" y="320.8" class="sc" style="font-size:6.2px;fill:#38386a">VDD</text>
<text x="277.2" y="326.8" class="sc" style="font-size:6.2px;fill:#38386a" textLength="24" lengthAdjust="spacingAndGlyphs">VISENSE</text>
<text x="277.2" y="333.8" class="sc" style="font-size:6.2px;fill:#38386a">R1</text>
<text x="295.6" y="333.8" class="sc" style="font-size:6.2px;fill:#38386a">R1</text>
<text x="273" y="303.8" class="sc" >13</text>
<text x="275.6" y="344" class="sc" >PT2201</text>
<text x="267.5" y="311.7" class="sc" style="font-size:5px;fill:#606070;stroke:none">1</text>
<text x="307.5" y="311.7" class="sc" style="font-size:5px;fill:#606070;stroke:none">8</text>
<text x="267.5" y="318.5" class="sc" style="font-size:5px;fill:#606070;stroke:none">2</text>
<text x="307.5" y="318.5" class="sc" style="font-size:5px;fill:#606070;stroke:none">7</text>
<text x="267.5" y="324.4" class="sc" style="font-size:5px;fill:#606070;stroke:none">3</text>
<text x="307.5" y="324.4" class="sc" style="font-size:5px;fill:#606070;stroke:none">6</text>
<text x="267.5" y="331.2" class="sc" style="font-size:5px;fill:#606070;stroke:none">4</text>
<text x="307.5" y="331.2" class="sc" style="font-size:5px;fill:#606070;stroke:none">5</text>
<circle cx="265.6" cy="293.7" r="1.8" fill="none" stroke="#d84040" stroke-width="1"/>
<text x="259" y="290" class="gnd" >GND</text>
<path d="M265.6 295.5 L265.6 312.3" stroke="#38357c" stroke-width="1.2" fill="none"/>
<circle cx="265.6" cy="298.6" r="1.6" fill="#38357c"/>
<path d="M265.6 298.6 L291.5 298.6" stroke="#38357c" stroke-width="1.2" fill="none"/>
<path d="M294.3 298.6 L389.8 298.6" stroke="#38357c" stroke-width="1.2" fill="none"/>
<path d="M291.5 294.4 L291.5 302.8" stroke="#4040c8" stroke-width="1.3" fill="none"/>
<path d="M294.3 294.4 L294.3 302.8" stroke="#4040c8" stroke-width="1.3" fill="none"/>
<text x="289.5" y="283.2" class="sc" >C5</text>
<text x="277.6" y="289.2" class="sc" >1UF/25V</text>
<path d="M305.6 319.1 L389.8 319.1" stroke="#38357c" stroke-width="1.2" fill="none"/>
<path d="M265.6 331.8 L259.6 331.8 L259.6 338.8" stroke="#38357c" stroke-width="1.2" fill="none"/>
<path d="M259.6 338.8 L262.2 340.8 L257.0 344.9 L262.2 348.9 L257.0 352.9 L262.2 357.0 L259.6 359.0" stroke="#4040c8" stroke-width="1.0" fill="none"/>
<path d="M259.6 359.0 L259.6 376.1 L380.4 376.1" stroke="#38357c" stroke-width="1.2" fill="none"/>
<text x="260.3" y="343.9" class="sc" >R10</text>
<text x="260.3" y="350.8" class="sc" >100K</text>
<path d="M313.2 331.8 L313.2 342.3" stroke="#38357c" stroke-width="1.2" fill="none"/>
<rect x="310.6" y="342.3" width="5" height="20.4" fill="none" stroke="#3434c8" stroke-width="1.0"/>
<path d="M308.6 359.0 L317.6 347.0" stroke="#4040c8" stroke-width="0.9" fill="none"/>
<path d="M313.2 362.7 L313.2 376.1" stroke="#38357c" stroke-width="1.2" fill="none"/>
<text x="298" y="353.5" class="sc" >R18</text>
<text x="298" y="360" class="sc" >470K</text>
<path d="M313.2 285.0 L315.8 287.3 L310.6 291.8 L315.8 296.3 L310.6 300.8 L315.8 305.3 L313.2 307.6" stroke="#4040c8" stroke-width="1.0" fill="none"/>
<path d="M313.2 307.6 L313.2 312.3" stroke="#38357c" stroke-width="1.2" fill="none"/>
<path d="M313.2 285.0 L313.2 272.0" stroke="#38357c" stroke-width="1.2" fill="none"/>
<text x="314.4" y="290" class="sc" >R21</text>
<text x="315.6" y="296.8" class="sc" >47</text>
<path d="M313.2 272.0 L321.0 272.0" stroke="#5a5a66" stroke-width="1.1" fill="none"/>
<text x="309.8" y="269.5" class="sc" >1</text>
<path d="M323.2 268.0 L323.2 279.5" stroke="#4040c8" stroke-width="1.3" fill="none"/>
<path d="M321.2 268.3 H323.2 M321.2 279.2 H323.2" stroke="#4040c8" stroke-width="1"/>
<rect x="326" y="265.2" width="7" height="11.8" fill="none" stroke="#4040c8" stroke-width="1.2"/>
<path d="M326 271 H329.5 L332.8 267.5 M329.5 271 L332.8 274.5" stroke="#4040c8" stroke-width="1" fill="none"/>
<path d="M333.0 259.0 L333.0 265.2" stroke="#5a5a66" stroke-width="1.1" fill="none"/>
<path d="M333.0 277.0 L333.0 285.0" stroke="#5a5a66" stroke-width="1.1" fill="none"/>
<text x="334" y="270.4" class="sc" >Q1</text>
<text x="337" y="279" class="sc" >FQP8N60</text>
<path d="M333.0 259.0 L373.2 259.0 L373.2 191.0" stroke="#38357c" stroke-width="1.2" fill="none"/>
<path d="M333.0 285.0 L370.0 285.0 L370.0 325.2" stroke="#38357c" stroke-width="1.2" fill="none"/>
<path d="M367 211.2 L379.4 211.2 L373.2 204 Z" fill="#3434c8"/>
<path d="M366.5 203.6 L380.0 203.6" stroke="#4040c8" stroke-width="1.4" fill="none"/>
<text x="380.5" y="202.4" class="sc" >D2</text>
<text class="sc" transform="translate(380.4,207.6) rotate(90)">BYV26E</text>
<path d="M383.8 231.6 L395.8 231.6 L389.8 238.8 Z" fill="#3434c8"/>
<path d="M383.3 239.0 L396.3 239.0" stroke="#4040c8" stroke-width="1.4" fill="none"/>
<text x="397" y="228" class="sc" >D3</text>
<text x="396" y="235.3" class="sc" >FR107</text>
<path d="M389.8 191.6 L389.8 319.1" stroke="#38357c" stroke-width="1.2" fill="none"/>
<circle cx="389.8" cy="251.6" r="1.6" fill="#38357c"/>
<path d="M389.8 251.6 L397.3 251.6" stroke="#38357c" stroke-width="1.2" fill="none"/>
<path d="M397.3 246.0 L397.3 256.8" stroke="#4040c8" stroke-width="1.3" fill="none"/>
<path d="M402.5 246 Q399.5 251.4 402.5 256.8" stroke="#3434c8" stroke-width="1.3" fill="none"/>
<path d="M401.0 251.6 L413.0 251.6" stroke="#38357c" stroke-width="1.2" fill="none"/>
<circle cx="414.8" cy="251.6" r="1.8" fill="none" stroke="#d84040" stroke-width="1"/>
<text x="418" y="254" class="gnd" >GND</text>
<text x="392" y="242.5" class="sc" >C8</text>
<text x="393" y="263.6" class="sc" >22UF50V</text>
<circle cx="389.8" cy="298.6" r="1.6" fill="#38357c"/>
<path d="M305.6 325.2 L336.5 325.2" stroke="#38357c" stroke-width="1.2" fill="none"/>
<path d="M336.5 325.2 L338.5 322.6 L342.5 327.8 L346.6 322.6 L350.6 327.8 L354.6 322.6 L356.6 325.2" stroke="#4040c8" stroke-width="1.0" fill="none"/>
<path d="M356.6 325.2 L380.4 325.2 L380.4 328.0" stroke="#38357c" stroke-width="1.2" fill="none"/>
<circle cx="329.5" cy="325.2" r="1.6" fill="#38357c"/>
<circle cx="363.5" cy="325.2" r="1.6" fill="#38357c"/>
<circle cx="370" cy="325.2" r="1.6" fill="#38357c"/>
<text x="336" y="331.5" class="sc" >100R11</text>
<path d="M329.5 325.2 L329.5 334.6" stroke="#38357c" stroke-width="1.2" fill="none"/>
<path d="M329.5 337.6 L329.5 376.1" stroke="#38357c" stroke-width="1.2" fill="none"/>
<path d="M324.0 334.6 L335.0 334.6" stroke="#4040c8" stroke-width="1.3" fill="none"/>
<path d="M324.0 337.6 L335.0 337.6" stroke="#4040c8" stroke-width="1.3" fill="none"/>
<text x="336" y="339" class="sc" >C6</text>
<text x="332.5" y="346.1" class="sc" >22PF50V</text>
<path d="M363.5 325.2 L363.5 328.0" stroke="#38357c" stroke-width="1.2" fill="none"/>
<path d="M363.5 328.0 L366.1 330.5 L360.9 335.5 L366.1 340.5 L360.9 345.5 L366.1 350.5 L363.5 353.0" stroke="#4040c8" stroke-width="1.0" fill="none"/>
<path d="M363.5 353.0 L363.5 376.1" stroke="#38357c" stroke-width="1.2" fill="none"/>
<path d="M380.4 328.0 L383.0 330.5 L377.8 335.5 L383.0 340.5 L377.8 345.5 L383.0 350.5 L380.4 353.0" stroke="#4040c8" stroke-width="1.0" fill="none"/>
<path d="M380.4 353.0 L380.4 376.1" stroke="#38357c" stroke-width="1.2" fill="none"/>
<text x="365.5" y="336.4" class="sc" >R12</text>
<text x="366" y="343.6" class="sc" >1</text>
<text x="382" y="336.4" class="sc" >R13</text>
<text x="382.5" y="343.6" class="sc" >1</text>
<circle cx="336.2" cy="380.2" r="1.8" fill="none" stroke="#d84040" stroke-width="1"/>
<text x="330" y="388.2" class="gnd" >GND</text>
<circle cx="336.2" cy="376.1" r="1.6" fill="#38357c"/>
<rect x="475.6" y="291" width="54.2" height="21.3" fill="none" stroke="#3434c8" stroke-width="1.3"/>
<path d="M464.0 309.2 L475.6 309.2" stroke="#5a5a66" stroke-width="1.2" fill="none"/>
<circle cx="463.7" cy="313.4" r="1.8" fill="none" stroke="#d84040" stroke-width="1"/>
<text x="457.7" y="320.7" class="gnd" >GND</text>
<path d="M493.4 297.3 L493.4 306.4" stroke="#4040c8" stroke-width="1.4" fill="none"/>
<path d="M475.6 295.5 L487.0 295.5 L493.4 299.5" stroke="#4040c8" stroke-width="1.0" fill="none"/>
<path d="M475.6 309.2 L487.0 309.2 L493.4 304.5" stroke="#4040c8" stroke-width="1.0" fill="none"/>
<path d="M517 298.7 L528.4 298.7 L522.7 304.3 Z" fill="#3434c8"/>
<path d="M517.0 305.0 L528.4 305.0" stroke="#4040c8" stroke-width="1.4" fill="none"/>
<path d="M522.7 295.5 L522.7 309.2" stroke="#4040c8" stroke-width="1.0" fill="none"/>
<path d="M510 297 L513 300 M511 300 L514 303" stroke="#3434c8" stroke-width="0.9"/>
<path d="M529.8 309.2 L545.2 309.2" stroke="#38357c" stroke-width="1.2" fill="none"/>
<text x="469.6" y="288.5" class="sc" >U1</text>
<text x="463.3" y="293.3" class="sc" >3</text>
<text x="463.3" y="307" class="sc" >4</text>
<text x="536.5" y="294" class="sc" >1</text>
<text x="536.5" y="307.7" class="sc" >2</text>
<text x="497" y="325" class="sc" >PC817</text>
<circle cx="545.2" cy="309.2" r="1.6" fill="#38357c"/>
<path d="M554.3 309.2 L556.5 306.6 L561.0 311.8 L565.5 306.6 L570.0 311.8 L574.5 306.6 L576.7 309.2" stroke="#4040c8" stroke-width="1.0" fill="none"/>
<path d="M545.2 309.2 L554.3 309.2" stroke="#38357c" stroke-width="1.2" fill="none"/>
<path d="M576.7 309.2 L587.9 309.2 L587.9 316.7" stroke="#38357c" stroke-width="1.2" fill="none"/>
<path d="M582.0 316.7 L593.8 316.7" stroke="#4040c8" stroke-width="1.3" fill="none"/>
<path d="M582.0 320.0 L593.8 320.0" stroke="#4040c8" stroke-width="1.3" fill="none"/>
<path d="M587.9 320.0 L587.9 345.5" stroke="#38357c" stroke-width="1.2" fill="none"/>
<text x="554.3" y="304.4" class="sc" >R14</text>
<text x="554.3" y="315.6" class="sc" >10K</text>
<text x="580" y="330" class="sc" >C7</text>
<text class="sc" transform="translate(599.5,337.5) rotate(-90)">100NF25V</text>
<path d="M545.2 309.2 L545.2 369.5 L587.9 369.5 L587.9 379.1 L611.8 379.1 L611.8 372.7" stroke="#38357c" stroke-width="1.2" fill="none"/>
<path d="M539.6 329.5 L550.8 329.5 L545.2 323.2 Z" fill="#3434c8"/>
<path d="M539.0 323.2 L551.4 323.2" stroke="#4040c8" stroke-width="1.4" fill="none"/>
<path d="M549.5 324.7 L564.0 324.7 L564.0 345.5 L611.8 345.5" stroke="#38357c" stroke-width="1.2" fill="none"/>
<circle cx="611.8" cy="345.5" r="1.6" fill="#38357c"/>
<circle cx="587.9" cy="345.5" r="1.6" fill="#38357c"/>
<path d="M611.8 318.3 L614.4 320.2 L609.2 324.1 L614.4 327.9 L609.2 331.7 L614.4 335.6 L611.8 337.5" stroke="#4040c8" stroke-width="1.0" fill="none"/>
<path d="M611.8 337.5 L611.8 353.5" stroke="#38357c" stroke-width="1.2" fill="none"/>
<path d="M611.8 353.5 L614.4 355.4 L609.2 359.3 L614.4 363.1 L609.2 366.9 L614.4 370.8 L611.8 372.7" stroke="#4040c8" stroke-width="1.0" fill="none"/>
<text x="523.5" y="337.5" class="sc" >TL431</text>
<text x="564" y="326.7" class="sc" >D6</text>
<text x="613.5" y="323.5" class="sc" >R15</text>
<text x="613.5" y="330" class="sc" >36K</text>
<text x="613.5" y="357" class="sc" >R16</text>
<text x="613.5" y="363.5" class="sc" >4.11K</text>
<circle cx="571" cy="370.5" r="1.8" fill="none" stroke="#d84040" stroke-width="1"/>
<text x="563" y="381" class="gnd" >GND1</text>
<circle cx="571" cy="369.5" r="1.6" fill="#38357c"/>
</g>
<rect x="758.2" y="73" width="1.3" height="427" fill="#6e6e6e"/>
<rect x="759.5" y="73" width="13" height="427" fill="#fdfcfa"/>
<rect x="771.8" y="73" width="1.8" height="427" fill="#5e5e5e"/>
<linearGradient id="shg" x1="0" y1="0" x2="1" y2="0"><stop offset="0" stop-color="#8a8a8a"/><stop offset="1" stop-color="#fafafa"/></linearGradient><rect x="773.6" y="73" width="3" height="427" fill="url(#shg)"/>
<rect x="759.5" y="156.6" width="12.3" height="1.2" fill="#6e6e6e"/>
<rect x="759.5" y="284.9" width="12.3" height="1.2" fill="#6e6e6e"/>
<rect x="759.5" y="412" width="12.3" height="1.2" fill="#6e6e6e"/>
<text x="763.8" y="98.8" class="tb" style="font-size:6.5px">A</text>
<text x="763.8" y="226.6" class="tb" style="font-size:6.5px">B</text>
<text x="763.8" y="354.3" class="tb" style="font-size:6.5px">C</text>
<text x="763.8" y="481.8" class="tb" style="font-size:6.5px">D</text>
<path d="M524.4 500 V473.3 H758.5 M524.4 493.8 H758.5 M558.4 493.8 V500 M692.4 493.8 V500" stroke="#3a3a3a" stroke-width="1.5" fill="none"/>
<text x="527.5" y="478.5" class="tb">Title</text>
<text x="527.5" y="499.5" class="tb">Size</text>
<text x="561.5" y="499.5" class="tb">Number</text>
<text x="695.3" y="499.5" class="tb">Revision</text>

</svg>
<div id="ov"><span id="u1" class="ut" style="left:14px;top:7.65px;font-size:11px;color:#1a1a1a;-webkit-text-stroke:0.15px #1a1a1a;transform:scaleX(1.0000)">Design</span><span id="u2" class="ut" style="left:61.3px;top:7.65px;font-size:11px;color:#1a1a1a;-webkit-text-stroke:0.15px #1a1a1a;transform:scaleX(1.0654)">Tools</span><span id="u3" class="ut" style="left:102.5px;top:7.65px;font-size:11px;color:#1a1a1a;-webkit-text-stroke:0.15px #1a1a1a;transform:scaleX(0.9872)">Reports</span><span id="u4" class="ut" style="left:154.8px;top:7.65px;font-size:11px;color:#1a1a1a;-webkit-text-stroke:0.15px #1a1a1a;transform:scaleX(1.1105)">Window</span><span id="u5" class="ut" style="left:208.5px;top:7.65px;font-size:11px;color:#1a1a1a;-webkit-text-stroke:0.15px #1a1a1a;transform:scaleX(1.0682)">Help</span><span id="u6" class="ut" style="left:620.5px;top:6.94px;font-size:12px;color:#111111;-webkit-text-stroke:0.15px #111111;transform:scaleX(0.9778)">D:\360</span><span id="u7" class="ut" style="left:725.4px;top:6.94px;font-size:12px;color:#111111;-webkit-text-stroke:0.15px #111111;transform:scaleX(0.9900)">\24V2A</span><span id="u8" class="ut" style="left:36.9px;top:55.55px;font-size:10px;color:#141414;-webkit-text-stroke:0.35px #141414;transform:scaleX(0.8333)">24v2A</span><span id="u9" class="ut" style="left:104.30000000000001px;top:55.55px;font-size:10px;color:#141414;-webkit-text-stroke:0.35px #141414;transform:scaleX(0.9190)">.Sch</span><span id="u10" class="ut" style="left:151px;top:55.55px;font-size:10px;color:#141414;-webkit-text-stroke:0.35px #141414;transform:scaleX(0.8333)">24v2A</span><span id="u11" class="ut" style="left:218.4px;top:55.55px;font-size:10px;color:#141414;-webkit-text-stroke:0.35px #141414;transform:scaleX(0.8750)">.PCB</span><span id="u12" class="ut" style="left:265.6px;top:55.55px;font-size:10px;color:#141414;-webkit-text-stroke:0.35px #141414;transform:scaleX(0.8333)">24v2A</span><span id="u13" class="ut" style="left:333.0px;top:55.55px;font-size:10px;color:#141414;-webkit-text-stroke:0.35px #141414;transform:scaleX(0.8800)">.PcbLib</span><span id="u14" class="ut" style="left:391.8px;top:55.55px;font-size:10px;color:#141414;-webkit-text-stroke:0.35px #141414;transform:scaleX(0.8893)">(9) Text Document</span><span id="u15" class="ut" style="left:504.2px;top:55.55px;font-size:10px;color:#141414;-webkit-text-stroke:0.35px #141414;transform:scaleX(0.8966)">(4) Schematic Library Document</span><span id="u16" class="ut" style="left:674.5px;top:55.55px;font-size:10px;color:#141414;-webkit-text-stroke:0.35px #141414;transform:scaleX(0.8333)">24v2A</span><span id="u17" class="ut" style="left:741.9px;top:55.55px;font-size:10px;color:#141414;-webkit-text-stroke:0.35px #141414;transform:scaleX(0.8750)">.PCB</span></div>
</body></html>
